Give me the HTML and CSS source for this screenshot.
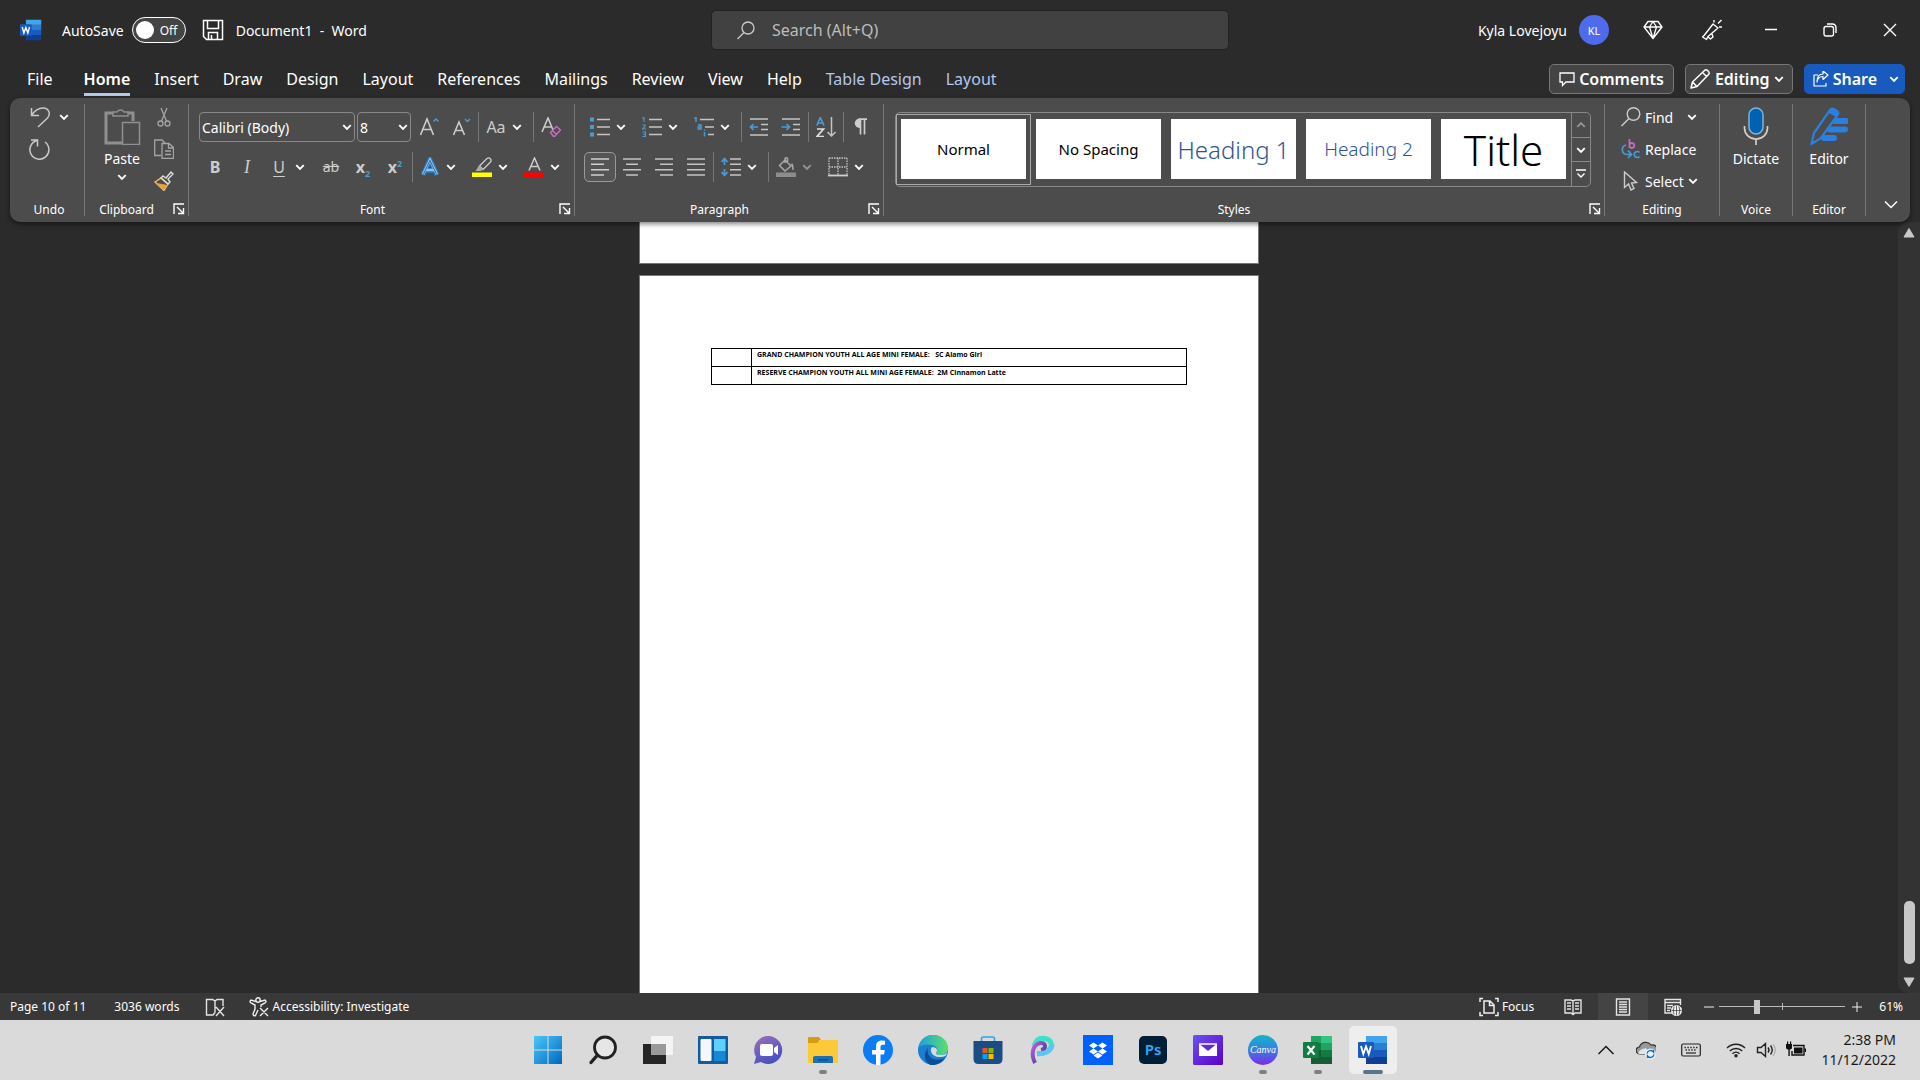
FILE: index.html
```html
<!DOCTYPE html>
<html lang="en">
<head>
    <meta charset="UTF-8">
    <meta name="viewport" content="width=device-width, initial-scale=1.0">
    <title>Document1 - Word</title>
    <link rel="stylesheet" href="styles.css">
</head>
<body>

    <!-- Shared icons -->
    <svg class="defs" aria-hidden="true">
        <symbol id="chev" viewBox="0 0 8 8"><path d="M1 2.500l3 3 3-3" fill="none" stroke="currentColor" stroke-width="1.500"/></symbol>
        <symbol id="launch" viewBox="0 0 12 12"><path d="M1 11V1h10M4 4l6 6M10.500 5v5.500H5" fill="none" stroke="currentColor" stroke-width="1.400"/></symbol>
        <symbol id="word" viewBox="0 0 30 30">
            <path d="M8 1h21v7H8z" fill="#41a5ee"/><path d="M8 8h21v7H8z" fill="#2b7cd3"/><path d="M8 15h21v7H8z" fill="#185abd"/><path d="M8 22h21v7H8z" fill="#103f91"/>
            <rect y="7" width="16" height="16" rx="1" fill="#185abd"/>
            <path d="M3 11l2.300 8L8 11.500 10.700 19 13 11" fill="none" stroke="#fff" stroke-width="1.900"/>
        </symbol>
    </svg>

    <!-- Title bar -->
    <header class="titlebar">
        <div class="title-left">
            <svg class="i22" viewBox="0 0 30 30"><use href="#word"/></svg>
            <label class="autosave">AutoSave
                <input type="checkbox" class="switch-input">
                <span class="switch"><span class="knob"></span>Off</span>
            </label>
            <button class="plain" aria-label="Save"><svg class="i22" viewBox="0 0 22 22"><path d="M1.500 1.500h19v19h-16l-3-3zM5.500 1.500v8h11v-8M6.500 20.500v-7h9v7M9.500 16v4.500" fill="none" stroke="#fff" stroke-width="1.500"/></svg></button>
            <span class="doc-name">Document1&nbsp; -&nbsp; Word</span>
        </div>
        <div class="search">
            <svg class="i20" viewBox="0 0 20 20"><circle cx="12" cy="8" r="6" fill="none" stroke="#ccc" stroke-width="1.300"/><path d="M8 12.500L1.500 19" stroke="#ccc" stroke-width="1.300"/></svg>
            <input type="text" placeholder="Search (Alt+Q)" aria-label="Search">
        </div>
        <div class="title-right">
            <span class="user">Kyla Lovejoyu</span>
            <span class="avatar">KL</span>
            <button class="win" aria-label="Premium"><svg class="i20" viewBox="0 0 20 20"><path d="M5 1.500h10l4 5.500-9 11.500L1 7zM1 7h18M10 1.500L6.500 7 10 18.500 13.500 7z" fill="none" stroke="#fff" stroke-width="1.300" stroke-linejoin="round"/></svg></button>
            <button class="win" aria-label="Coming soon"><svg class="i22" viewBox="0 0 22 22"><path d="M12 5l5 4-10 8.500-1.500 3-4-2.500 2-2zM6.500 17.500l3 2.500 2.500-2-1-3M13 3.500V1M17 4.500L20.500 1M18 8h3" fill="none" stroke="#fff" stroke-width="1.400" stroke-linejoin="round"/></svg></button>
            <button class="win" aria-label="Minimize"><svg class="i14" viewBox="0 0 14 14"><path d="M1 6.500h12" stroke="#fff" stroke-width="1.500"/></svg></button>
            <button class="win" aria-label="Restore"><svg class="i14" viewBox="0 0 14 14"><rect x="1" y="3.500" width="9.500" height="9.500" rx="2" fill="none" stroke="#fff" stroke-width="1.400"/><path d="M4 1h5.500a3.500 3.500 0 0 1 3.500 3.500V10" fill="none" stroke="#fff" stroke-width="1.400"/></svg></button>
            <button class="win" aria-label="Close"><svg class="i14" viewBox="0 0 14 14"><path d="M1 1l12 12M13 1L1 13" stroke="#fff" stroke-width="1.400"/></svg></button>
        </div>
    </header>

    <!-- Ribbon tabs -->
    <nav class="tabs">
        <a href="#" class="tab file">File</a>
        <a href="#" class="tab active">Home</a>
        <a href="#" class="tab">Insert</a>
        <a href="#" class="tab">Draw</a>
        <a href="#" class="tab">Design</a>
        <a href="#" class="tab">Layout</a>
        <a href="#" class="tab">References</a>
        <a href="#" class="tab">Mailings</a>
        <a href="#" class="tab">Review</a>
        <a href="#" class="tab">View</a>
        <a href="#" class="tab">Help</a>
        <a href="#" class="tab context">Table Design</a>
        <a href="#" class="tab context">Layout</a>
        <div class="tab-actions">
            <button class="action"><svg class="i16" viewBox="0 0 16 16"><path d="M1 2h14v9H7l-3.500 3.500V11H1z" fill="none" stroke="#fff" stroke-width="1.300"/></svg>Comments</button>
            <button class="action"><svg class="i22" viewBox="0 0 22 22"><path d="M2 20l1.500-6L15.500 2.500a2 2 0 0 1 3 0l1 1a2 2 0 0 1 0 3L8 18.500zM13.500 4.500l4 4M3.500 14l4.500 4.500" fill="none" stroke="#fff" stroke-width="1.500" stroke-linejoin="round"/></svg>Editing<svg class="i10" viewBox="0 0 8 8"><use href="#chev"/></svg></button>
            <button class="action share"><svg class="i16" viewBox="0 0 16 16"><path d="M5 4H1v11h12v-3M4 11c.500-4 3-5.500 6-5.500V8.500l5-4.500-5-4v3C6 3 4 6 4 11z" fill="none" stroke="#fff" stroke-width="1.200" stroke-linejoin="round"/></svg>Share<svg class="i10" viewBox="0 0 8 8"><use href="#chev"/></svg></button>
        </div>
    </nav>

    <!-- Ribbon -->
    <section class="ribbon">
        <div class="group undo">
            <div class="undo-tools">
                <button class="mini" aria-label="Undo"><svg class="i22" viewBox="0 0 22 22"><path d="M2.500 2v7.500H10M2.500 9.500C6 4 10 2 14 2c6 0 8 6 4.500 10L9 21" fill="none" stroke="#c8c8c8" stroke-width="1.500"/></svg><svg class="i10" viewBox="0 0 8 8"><use href="#chev"/></svg></button>
                <button class="mini" aria-label="Repeat"><svg class="i22" viewBox="0 0 22 22"><path d="M2 2h6.500v6.500M8 2.500A9.500 9.500 0 1 0 16 4" fill="none" stroke="#c8c8c8" stroke-width="1.500"/></svg></button>
            </div>
            <div class="foot"><span>Undo</span></div>
        </div>

        <div class="group clipboard">
            <div class="clip-tools">
                <button class="big" aria-label="Paste"><svg class="i38" viewBox="0 0 38 38"><path d="M10 6H3v30h17M25 6h5v8" fill="none" stroke="#8f8f8f" stroke-width="3"/><path d="M10 9V5h4a4 4 0 0 1 7 0h4v4z" fill="#4c4c4c" stroke="#8f8f8f" stroke-width="1.500"/><rect x="19.500" y="15.500" width="17" height="22" fill="#4c4c4c" stroke="#8f8f8f" stroke-width="1.500"/></svg><span>Paste</span><svg class="i10" viewBox="0 0 8 8"><use href="#chev"/></svg></button>
                <div class="clip-side">
                    <button class="mini" aria-label="Cut"><svg class="i20" viewBox="0 0 20 20"><g fill="none" stroke="#a5a5a5" stroke-width="1.300"><circle cx="6.500" cy="16.500" r="2.500"/><circle cx="13.500" cy="16.500" r="2.500"/><path d="M7 1l5.500 13M13 1L7.500 14"/></g></svg></button>
                    <button class="mini" aria-label="Copy"><svg class="i20" viewBox="0 0 20 20"><path d="M7 16.500H.700V1H8l3 3M8 4.500h7l4.500 4V19.500H8zM14.500 5v4h5M11 12h6M11 15.500h6" fill="none" stroke="#a5a5a5" stroke-width="1.300"/></svg></button>
                    <button class="mini" aria-label="Format Painter"><svg class="i20" viewBox="0 0 20 20"><path d="M1 11l6-4 7 6-4 6.500z" fill="#4c4c4c" stroke="#f4bc60" stroke-width="1.400"/><path d="M3 12l10 2-3.500 5z" fill="#e9a33a"/><path d="M7 7l2-2 3 2 5-6 2 2-5 5 2 3-2 2z" fill="none" stroke="#ddd" stroke-width="1.400"/></svg></button>
                </div>
            </div>
            <div class="foot"><span>Clipboard</span><button class="launcher" aria-label="Clipboard settings"><svg class="i12" viewBox="0 0 12 12"><use href="#launch"/></svg></button></div>
        </div>

        <div class="group font">
            <div class="row">
                <label class="combo family"><select aria-label="Font"><option>Calibri (Body)</option></select><svg class="i10" viewBox="0 0 8 8"><use href="#chev"/></svg></label>
                <label class="combo size"><select aria-label="Font size"><option>8</option></select><svg class="i10" viewBox="0 0 8 8"><use href="#chev"/></svg></label>
                <button class="tool" aria-label="Grow font"><svg class="i20" viewBox="0 0 20 20"><path d="M1.500 18L8 2l6.500 16M4 12.500h8" fill="none" stroke="#ccc" stroke-width="1.600"/><path d="M14.500 4.500L17 2l2.500 2.500" fill="none" stroke="#4a9bd4" stroke-width="1.500"/></svg></button>
                <button class="tool" aria-label="Shrink font"><svg class="i20" viewBox="0 0 20 20"><path d="M2.500 18L8 5l5.500 13M4.500 13.500h7" fill="none" stroke="#ccc" stroke-width="1.600"/><path d="M14 2l2.500 2.500L19 2" fill="none" stroke="#4a9bd4" stroke-width="1.500"/></svg></button>
                <span class="sep"></span>
                <button class="tool split"><span class="glyph">Aa</span><svg class="i10" viewBox="0 0 8 8"><use href="#chev"/></svg></button>
                <span class="sep"></span>
                <button class="tool" aria-label="Clear formatting"><svg class="i20" viewBox="0 0 20 20"><path d="M1 15L7 1l5 12M3 10h7" fill="none" stroke="#ccc" stroke-width="1.600"/><path d="M9.500 15.500l6-6 4 3.500-6 6.500h-1zM11.500 13.500l4 4" fill="none" stroke="#c86bc8" stroke-width="1.500"/></svg></button>
            </div>
            <div class="row">
                <button class="tool" aria-label="Bold"><span class="glyph bold">B</span></button>
                <button class="tool" aria-label="Italic"><span class="glyph italic">I</span></button>
                <button class="tool split" aria-label="Underline"><span class="glyph under">U</span><svg class="i10" viewBox="0 0 8 8"><use href="#chev"/></svg></button>
                <button class="tool" aria-label="Strikethrough"><span class="glyph strike">ab</span></button>
                <button class="tool" aria-label="Subscript"><span class="glyph bold">x<sub>2</sub></span></button>
                <button class="tool" aria-label="Superscript"><span class="glyph bold">x<sup>2</sup></span></button>
                <span class="sep"></span>
                <button class="tool split" aria-label="Text effects"><svg class="i20" viewBox="0 0 20 20"><path d="M3 18L10 2.500 17 18M5.500 13.500h9" fill="none" stroke="#1f78c4" stroke-width="5"/><path d="M3 17.500L10 3l7 14.500M6 13h8" fill="none" stroke="#8cc4f2" stroke-width="2.600"/><path d="M3.300 17.500L10 3.500l6.700 14" fill="none" stroke="#3d4c5a" stroke-width=".8"/></svg><svg class="i10" viewBox="0 0 8 8"><use href="#chev"/></svg></button>
                <button class="tool split" aria-label="Highlight"><svg class="i20" viewBox="0 0 20 20"><path d="M7.500 9L15 1.500a2.500 2.500 0 0 1 3.500 3.500L11 12.500z" fill="none" stroke="#ccc" stroke-width="1.300"/><path d="M7 8.500l4.500 4-3 1.500H3.500z" fill="#aaa"/><path d="M0 15.500h20v4.500H0z" fill="#ff0"/></svg><svg class="i10" viewBox="0 0 8 8"><use href="#chev"/></svg></button>
                <button class="tool split" aria-label="Font color"><svg class="i20" viewBox="0 0 20 20"><path d="M5 13.500L10.500 1 16 13.500M7 9.500h7" fill="none" stroke="#ccc" stroke-width="1.500"/><path d="M0 15.500h20v4.500H0z" fill="red"/></svg><svg class="i10" viewBox="0 0 8 8"><use href="#chev"/></svg></button>
            </div>
            <div class="foot"><span>Font</span><button class="launcher" aria-label="Font settings"><svg class="i12" viewBox="0 0 12 12"><use href="#launch"/></svg></button></div>
        </div>

        <div class="group paragraph">
            <div class="row">
                <button class="tool split" aria-label="Bullets"><svg class="i20" viewBox="0 0 20 20"><path d="M0 .5h4v4H0zM0 8h4v4H0zM0 15.500h4v4H0z" fill="#4a9bd4"/><path d="M7 2.500h13M7 10h13M7 17.500h13" stroke="#c4c4c4" stroke-width="1.600"/></svg><svg class="i10" viewBox="0 0 8 8"><use href="#chev"/></svg></button>
                <button class="tool split" aria-label="Numbering"><svg class="i20" viewBox="0 0 20 20"><path d="M.5 1.500L2 .500V5M.5 8h2.500v1.500L.5 12H4M.5 15H3.500v4.500H.5M1 17.200h2.500" fill="none" stroke="#4a9bd4" stroke-width="1.100"/><path d="M7 2.500h13M7 10h13M7 17.500h13" stroke="#c4c4c4" stroke-width="1.600"/></svg><svg class="i10" viewBox="0 0 8 8"><use href="#chev"/></svg></button>
                <button class="tool split" aria-label="Multilevel list"><svg class="i20" viewBox="0 0 20 20"><path d="M.5 1.500L2 .500V5M4 8h3v4H4.200v-2H7M10.500 15v4.500M10.500 12.500v1.200" fill="none" stroke="#4a9bd4" stroke-width="1.500"/><path d="M6 2.500h14M11 10h9M14 17.500h6" stroke="#c4c4c4" stroke-width="1.600"/></svg><svg class="i10" viewBox="0 0 8 8"><use href="#chev"/></svg></button>
                <span class="sep"></span>
                <button class="tool" aria-label="Decrease indent"><svg class="i20" viewBox="0 0 20 20"><path d="M1 2h18M12 7.500h7M12 12.500h7M1 18h18" stroke="#c4c4c4" stroke-width="1.600"/><path d="M9 10H1.500M4.500 7l-3 3 3 3" fill="none" stroke="#4a9bd4" stroke-width="1.700"/></svg></button>
                <button class="tool" aria-label="Increase indent"><svg class="i20" viewBox="0 0 20 20"><path d="M1 2h18M12 7.500h7M12 12.500h7M1 18h18" stroke="#c4c4c4" stroke-width="1.600"/><path d="M.5 10H8M5.500 7l3 3-3 3" fill="none" stroke="#4a9bd4" stroke-width="1.700"/></svg></button>
                <span class="sep"></span>
                <button class="tool" aria-label="Sort"><svg class="i20" viewBox="0 0 20 20"><path d="M.8 8.500L4.300.500 8 8.500M2 6h4.500" fill="none" stroke="#4a9bd4" stroke-width="1.700"/><path d="M1 12h6.500L1 19.500h7" fill="none" stroke="#ddd" stroke-width="1.700"/><path d="M15.500 0v19M11.500 15l4 4 4-4" fill="none" stroke="#c4c4c4" stroke-width="1.500"/></svg></button>
                <span class="sep"></span>
                <button class="tool" aria-label="Show marks"><svg class="i20" viewBox="0 0 20 20"><path d="M9.500 2v15.500M13.500 2v15.500M8 2.200h8" fill="none" stroke="#ccc" stroke-width="1.700"/><path d="M9.500 1.500v9.500H8.500a4.750 4.750 0 0 1 0-9.500z" fill="#ccc"/></svg></button>
            </div>
            <div class="row">
                <button class="tool on" aria-label="Align left"><svg class="i20" viewBox="0 0 20 20"><path d="M1 2h18M1 7.300h13M1 12.700h18M1 18h13" stroke="#d0d0d0" stroke-width="1.600"/></svg></button>
                <button class="tool" aria-label="Center"><svg class="i20" viewBox="0 0 20 20"><path d="M1 2h18M4 7.300h12M1 12.700h18M4 18h12" stroke="#c4c4c4" stroke-width="1.600"/></svg></button>
                <button class="tool" aria-label="Align right"><svg class="i20" viewBox="0 0 20 20"><path d="M1 2h18M6 7.300h13M1 12.700h18M6 18h13" stroke="#c4c4c4" stroke-width="1.600"/></svg></button>
                <button class="tool" aria-label="Justify"><svg class="i20" viewBox="0 0 20 20"><path d="M1 2h18M1 7.300h18M1 12.700h18M1 18h18" stroke="#c4c4c4" stroke-width="1.600"/></svg></button>
                <span class="sep"></span>
                <button class="tool split" aria-label="Line spacing"><svg class="i20" viewBox="0 0 20 20"><path d="M3.500 2v6M3.500 12v6M.5 5l3-3.500 3 3.500M.5 15l3 3.500 3-3.500" fill="none" stroke="#4a9bd4" stroke-width="1.700"/><path d="M9 2h11M9 7.300h11M9 12.700h11M9 18h11" stroke="#c4c4c4" stroke-width="1.600"/></svg><svg class="i10" viewBox="0 0 8 8"><use href="#chev"/></svg></button>
                <span class="sep"></span>
                <button class="tool split" aria-label="Shading"><svg class="i20" viewBox="0 0 20 20"><path d="M9 3l6 6-6 5-5.500-5.500zM9 6V1.500a1.500 1.500 0 0 1 2.500 0V6M15.500 8q1-3 1.500 5" fill="none" stroke="#a8a8a8" stroke-width="1.500"/><path d="M0 15.500h20v4.500H0z" fill="#8c8c8c"/></svg><svg class="i10 dim" viewBox="0 0 8 8"><use href="#chev"/></svg></button>
                <button class="tool split" aria-label="Borders"><svg class="i20" viewBox="0 0 20 20"><path d="M1 1h18M1 1v17M19 1v17M10 1v17M1 10h18" fill="none" stroke="#c4c4c4" stroke-width="1.300" stroke-dasharray="1.500 1"/><path d="M0 18.500h20" stroke="#d0d0d0" stroke-width="1.800"/></svg><svg class="i10" viewBox="0 0 8 8"><use href="#chev"/></svg></button>
            </div>
            <div class="foot"><span>Paragraph</span><button class="launcher" aria-label="Paragraph settings"><svg class="i12" viewBox="0 0 12 12"><use href="#launch"/></svg></button></div>
        </div>

        <div class="group styles">
            <div class="gallery">
                <button class="style selected"><span>Normal</span></button>
                <button class="style"><span>No Spacing</span></button>
                <button class="style"><span class="h1">Heading 1</span></button>
                <button class="style"><span class="h2">Heading 2</span></button>
                <button class="style"><span class="title">Title</span></button>
                <div class="gallery-nav">
                    <button aria-label="Up"><svg class="i10 up dim" viewBox="0 0 8 8"><use href="#chev"/></svg></button>
                    <button aria-label="Down"><svg class="i10" viewBox="0 0 8 8"><use href="#chev"/></svg></button>
                    <button aria-label="More"><svg class="i10" viewBox="0 0 10 10"><path d="M0 1h10M1.500 4.500L5 8l3.500-3.500" fill="none" stroke="#fff" stroke-width="1.400"/></svg></button>
                </div>
            </div>
            <div class="foot"><span>Styles</span><button class="launcher" aria-label="Styles settings"><svg class="i12" viewBox="0 0 12 12"><use href="#launch"/></svg></button></div>
        </div>

        <div class="group editing">
            <div class="edit-tools">
                <button class="line find"><svg class="i20" viewBox="0 0 20 20"><circle cx="12.500" cy="7" r="6.300" fill="none" stroke="#ccc" stroke-width="1.400"/><path d="M8 11.500L.5 19" stroke="#ccc" stroke-width="1.400"/></svg>Find<svg class="i10" viewBox="0 0 8 8"><use href="#chev"/></svg></button>
                <button class="line"><svg class="i20" viewBox="0 0 20 20"><path d="M8.500 0v9M8.500 5.500a2.500 2.500 0 1 1 0 2" fill="none" stroke="#c86bc8" stroke-width="1.800"/><path d="M18.500 13.500a3 3 0 1 0 0 4M5 6c-5 1-5 9 1 9.500h4M7 11.500l3.500 4L7 19" fill="none" stroke="#4a9bd4" stroke-width="1.700"/></svg>Replace</button>
                <button class="line select"><svg class="i20" viewBox="0 0 20 20"><path d="M3.500 1v15.500l4-3.500 2.500 6 3-1.500-2.500-5.500 5-.5z" fill="none" stroke="#ccc" stroke-width="1.400"/></svg>Select<svg class="i10" viewBox="0 0 8 8"><use href="#chev"/></svg></button>
            </div>
            <div class="foot"><span>Editing</span></div>
        </div>

        <div class="group narrow">
            <button class="big"><svg class="i38" viewBox="0 0 38 38"><rect x="12" y="1" width="14" height="26" rx="7" fill="#0063b1" stroke="#7db4dc" stroke-width="1.500"/><path d="M7.500 19v2a11.500 11 0 0 0 23 0v-2M19 32v6" fill="none" stroke="#d5cdc4" stroke-width="1.700"/></svg><span>Dictate</span></button>
            <div class="foot"><span>Voice</span></div>
        </div>

        <div class="group narrow">
            <button class="big"><svg class="i38" viewBox="0 0 38 38"><path d="M25 14h11M20 22.500h15M14 31h10" stroke="#2b7fe0" stroke-width="6" stroke-linecap="round"/><path d="M1.500 37L4 26 20 3q1.500-2 3.500-1L27 4q2 1.500 1 3.500L11 31z" fill="#4c4c4c" stroke="#2b7fe0" stroke-width="2.200"/><path d="M20 3q1.500-2 3.500-1L27 4q2 1.500 1 3.500l-2 2.500-8-4.500z" fill="#2b7fe0"/></svg><span>Editor</span></button>
            <div class="foot"><span>Editor</span></div>
        </div>

        <div class="collapse"><button class="plain" aria-label="Ribbon options"><svg class="i14" viewBox="0 0 14 14"><path d="M1 4.500l6 6 6-6" fill="none" stroke="#fff" stroke-width="1.500"/></svg></button></div>
    </section>

    <!-- Document -->
    <main class="workspace">
        <div class="pages">
            <div class="page previous"></div>
            <div class="page current">
                <table>
                    <tr><td class="place"></td><td>GRAND CHAMPION YOUTH ALL AGE MINI FEMALE:&nbsp;&nbsp; SC Alamo Girl</td></tr>
                    <tr><td class="place"></td><td>RESERVE CHAMPION YOUTH ALL MINI AGE FEMALE:&nbsp; 2M Cinnamon Latte</td></tr>
                </table>
            </div>
        </div>
        <div class="scrollbar">
            <button class="plain" aria-label="Scroll up"><svg class="i12" viewBox="0 0 12 12"><path d="M6 1.500L11 10H1z" fill="#c8c8c8" stroke="#c8c8c8" stroke-linejoin="round"/></svg></button>
            <div class="thumb"></div>
            <button class="plain" aria-label="Scroll down"><svg class="i12" viewBox="0 0 12 12"><path d="M6 10.500L1 2h10z" fill="#c8c8c8" stroke="#c8c8c8" stroke-linejoin="round"/></svg></button>
        </div>
    </main>

    <!-- Status bar -->
    <footer class="statusbar">
        <button class="status pagecount">Page 10 of 11</button>
        <button class="status words">3036 words</button>
        <button class="status proof" aria-label="Proofing"><svg class="i20" viewBox="0 0 20 20"><path d="M10 15.500l-2 2.500H1.500V2.500h6L10 4v11.500M10 4l2-1.500h6V9M11 10l8 9M19 10l-8 9" fill="none" stroke="#e4e4e4" stroke-width="1.400"/></svg></button>
        <button class="status"><svg class="i20" viewBox="0 0 20 20"><circle cx="9" cy="3" r="2.200" fill="none" stroke="#eee" stroke-width="1.400"/><path d="M7 4.500L2 3q-2 1.500 0 3l4 2v4l-2 5q.500 2.500 2.500 1.500L9 13M11 4.500L16 3q2 1.500 0 3l-4 2v2M11 11l8 8M19 11l-8 8" fill="none" stroke="#eee" stroke-width="1.400"/></svg>Accessibility: Investigate</button>
        <div class="views">
            <button class="status focus"><svg class="i20" viewBox="0 0 20 20"><path d="M1 5V1.500h3M1 15v3.500h3M16 1.500h3V5M16 18.500h3V15" fill="none" stroke="#eee" stroke-width="1.500"/><path d="M5 4h6l4 4v8H5zM10.500 4v4.500H15" fill="none" stroke="#eee" stroke-width="1.500"/></svg>Focus</button>
            <button class="view" aria-label="Read mode"><svg class="i18" viewBox="0 0 18 18"><path d="M1 2h6l2 1 2-1h6v13h-6l-2 1.500L7 15H1zM9 3v13M3 5h4M3 8h4M3 11h4M11 5h4M11 8h4M11 11h4" fill="none" stroke="#e4e4e4" stroke-width="1.400"/></svg></button>
            <button class="view current-view" aria-label="Print layout"><svg class="i18" viewBox="0 0 18 18"><path d="M2.500 1h13v16h-13zM5 4h8M5 6.500h8M5 9h8M5 11.500h8M5 14h8" fill="none" stroke="#e4e4e4" stroke-width="1.400"/></svg></button>
            <button class="view" aria-label="Web layout"><svg class="i18" viewBox="0 0 18 18"><path d="M8 15H1V1.500h15.500V7M1 4.500h15M3 7.500h6M3 10h4M3 12.500h3" fill="none" stroke="#e4e4e4" stroke-width="1.400"/><circle cx="12.500" cy="12.500" r="5.500" fill="#eee"/><path d="M7.500 12.500h10M12.500 7.500v10M10 8.500q-1.500 4 0 8M15 8.500q1.500 4 0 8" fill="none" stroke="#444" stroke-width=".8"/></svg></button>
            <button class="zoom-step" aria-label="Zoom out"><svg class="i10" viewBox="0 0 10 10"><path d="M0 5h10" stroke="#eee"/></svg></button>
            <input type="range" class="zoom" min="0" max="100" value="29" aria-label="Zoom">
            <button class="zoom-step" aria-label="Zoom in"><svg class="i10" viewBox="0 0 10 10"><path d="M0 5h10M5 0v10" stroke="#eee"/></svg></button>
            <button class="status percent">61%</button>
        </div>
    </footer>

    <!-- Taskbar -->
    <div class="taskbar">
        <div></div>
        <div class="apps">
            <button class="app" aria-label="Start"><svg viewBox="0 0 30 30"><defs><linearGradient id="gs" x2="1" y2="1"><stop stop-color="#4cc8f8"/><stop offset="1" stop-color="#0067c0"/></linearGradient></defs><path d="M1 1h13.500v13.500H1zM15.500 1H29v13.500H15.500zM1 15.500h13.500V29H1zM15.500 15.500H29V29H15.500z" fill="url(#gs)"/></svg></button>
            <button class="app" aria-label="Search"><svg viewBox="0 0 30 30"><circle cx="17" cy="12.500" r="10.500" fill="#e6e6e6" stroke="#222" stroke-width="2.800"/><path d="M9.500 20L3 27.500" stroke="#222" stroke-width="3.400" stroke-linecap="round"/></svg></button>
            <button class="app" aria-label="Task view"><svg viewBox="0 0 30 30"><path d="M0 9h23v20H0z" fill="#262626"/><path d="M8 1h22v19H8z" fill="#f4f4f4"/><path d="M8 9h15v11H8z" fill="#9a9a9a"/></svg></button>
            <button class="app" aria-label="Widgets"><svg viewBox="0 0 30 30"><rect y="1" width="30" height="28" rx="1" fill="#145aa0"/><rect x="2.500" y="4" width="11" height="22" rx="1" fill="#f5f7fa"/><path d="M16 4h11.500v12H16z" fill="#5fd0fa"/><path d="M16 16h11.500v10H16z" fill="#1787d6"/></svg></button>
            <button class="app" aria-label="Chat"><svg viewBox="0 0 30 30"><defs><linearGradient id="gc" x2=".5" y2="1"><stop stop-color="#9a72b8"/><stop offset="1" stop-color="#4a50c0"/></linearGradient></defs><path d="M15 1a14 14 0 1 1-7 26L1 29l2-7A14 14 0 0 1 15 1z" fill="url(#gc)"/><rect x="7" y="9" width="13" height="12" rx="2" fill="#fff"/><path d="M21 13l4-3v10l-4-3z" fill="#fff"/></svg></button>
            <button class="app running" aria-label="File Explorer"><svg viewBox="0 0 30 30"><path d="M0 3q0-1 1-1h10l2 3h-2v5H0z" fill="#d99a16"/><path d="M0 8h9l3-3h18v23H0z" fill="#fcc937"/><path d="M5 28v-5q0-2 2-2h16q2 0 2 2v5z" fill="#1a6fb5"/><path d="M10 25h10" stroke="#0b4f8c" stroke-width="1.500"/></svg></button>
            <button class="app" aria-label="Facebook"><svg viewBox="0 0 30 30"><circle cx="15" cy="15" r="15" fill="#0a7cf5"/><path d="M13 30V19.500H9V15h4v-3.500c0-4 2.300-6 6-6l3 .3v4h-2c-2 0-2.500 1-2.500 2.200v3h4.300l-.8 4.500h-3.500V30z" fill="#fff"/></svg></button>
            <button class="app" aria-label="Edge"><svg viewBox="0 0 30 30"><defs><linearGradient id="ge" x2="1"><stop stop-color="#1b9fe0"/><stop offset="1" stop-color="#5be06a"/></linearGradient></defs><circle cx="15" cy="15" r="15" fill="#1a7fd0"/><path d="M.500 13C2 5 8 0 15 0c9 0 15 6 15 13 0 5-4 7-8 7-3 0-5-1-3.500-3 1-1.500 1.500-5-3-6.500C10 9 4 9 .500 13z" fill="url(#ge)"/><path d="M10 13c-2 8 5 15 17 10-4 6-11 8-15 6.700C5 26 6 17 10 13z" fill="#0c4f94"/><path d="M14 12c-3 3 0 10 7 10 3 0 5-.5 7-1.500L30 16c-1 3-4 4-8 4-3 0-5-1-3.500-3s0-5-4.500-5z" fill="#dadada"/></svg></button>
            <button class="app" aria-label="Store"><svg viewBox="0 0 30 30"><path d="M8.500 6V4q0-2 2-2h9q2 0 2 2v2" fill="none" stroke="#2ba5e8" stroke-width="1.600"/><path d="M.5 6h29v18q0 5-5 5h-19q-5 0-5-5z" fill="#1b4d84"/><path d="M9.500 13h5v5h-5z" fill="#f25022"/><path d="M15.500 13h5v5h-5z" fill="#7fba00"/><path d="M9.500 19h5v5h-5z" fill="#00a4ef"/><path d="M15.500 19h5v5h-5z" fill="#ffb900"/></svg></button>
            <button class="app" aria-label="Picsart"><svg viewBox="0 0 30 30"><defs><linearGradient id="gp" y2="1"><stop stop-color="#c45de0"/><stop offset="1" stop-color="#1f3d8c"/></linearGradient></defs><path d="M6 11C8 5 12 2.500 17 3.500c7 1 8 8 4 11.500-3 3-7 3-12 4" fill="none" stroke="#3fe0c8" stroke-width="5"/><path d="M7 28C3 20 4 10 12 8c6-1 7 6 1 7" fill="none" stroke="url(#gp)" stroke-width="4"/><path d="M9 18.500c6 0 9 0 12-3 2-2 3-3 3-6" fill="none" stroke="#5fc4f0" stroke-width="5"/></svg></button>
            <button class="app" aria-label="Dropbox"><svg viewBox="0 0 30 30"><path d="M0 0h30v30H0z" fill="#0061fe"/><path d="M10.500 7.500l4.500 3-4.500 3-4.500-3zM19.500 7.500l4.500 3-4.500 3-4.500-3zM10.500 13.500l4.500 3-4.500 3-4.500-3zM19.500 13.500l4.500 3-4.500 3-4.500-3zM15 17.500l4.500 3-4.500 3-4.500-3z" fill="#fff"/></svg></button>
            <button class="app" aria-label="Photoshop"><span class="ps">Ps</span></button>
            <button class="app" aria-label="Mail"><svg viewBox="0 0 30 30"><defs><linearGradient id="gm" x2="1" y2="1"><stop stop-color="#6c50f5"/><stop offset="1" stop-color="#5a00c8"/></linearGradient></defs><rect width="30" height="30" rx="1.500" fill="url(#gm)"/><path d="M6 9h18v12H6z" fill="#fff"/><path d="M6.500 9h17L15 16z" fill="#5b2bd8"/><path d="M6 9h18" stroke="#fff" stroke-width="1.500"/></svg></button>
            <button class="app running" aria-label="Canva"><span class="canva">Canva</span></button>
            <button class="app running" aria-label="Excel"><svg viewBox="0 0 30 30"><path d="M8 1h21v28H8z" fill="#21a366"/><path d="M18 1h11v7H18z" fill="#33c481"/><path d="M8 8h10v7H8z" fill="#107c41"/><path d="M8 15h21v14H8z" fill="#185c37"/><path d="M18 15h11v7H18z" fill="#107c41"/><rect y="7" width="16" height="16" rx="1" fill="#107c41"/><path d="M4.500 11l7 8.500M11.500 11l-7 8.500" stroke="#fff" stroke-width="2.100"/></svg></button>
            <button class="app running front" aria-label="Word"><svg viewBox="0 0 30 30"><use href="#word"/></svg></button>
        </div>
        <div class="tray">
            <button class="plain" aria-label="Show hidden icons"><svg class="i18" viewBox="0 0 18 18"><path d="M1.500 13L9 5.500l7.500 7.500" fill="none" stroke="#1a1a1a" stroke-width="1.500"/></svg></button>
            <button class="plain cloud" aria-label="OneDrive"><svg class="i20" viewBox="0 0 20 20"><path d="M4 14a3.500 3.500 0 0 1-.5-7A6.500 6.500 0 0 1 15 5a5 5 0 0 1 4 9z" fill="#999" stroke="#333" stroke-width="1.200"/><path d="M2 13q2-4 8-5l3 6H3z" fill="#e4e4e4"/><circle cx="14.500" cy="14" r="5.500" fill="#e8f3fc"/><path d="M11 13.500a3.600 3.600 0 0 1 6.500-1.500v-2M18 14.500a3.600 3.600 0 0 1-6.500 1.500v2" fill="none" stroke="#1468b8" stroke-width="1.400"/></svg></button>
            <button class="plain keyboard" aria-label="Touch keyboard"><svg class="i20" viewBox="0 0 20 20"><rect x=".7" y="4" width="18.600" height="12" rx="1.500" fill="none" stroke="#222" stroke-width="1.200"/><path d="M3.500 7.500h13M4.500 10h11" stroke="#222" stroke-width="1.400" stroke-dasharray="1.400 1.500"/><path d="M5 13h10" stroke="#222" stroke-width="1.200"/></svg></button>
            <button class="plain" aria-label="Network"><svg class="i20" viewBox="0 0 20 20"><path d="M1 8a12.700 12.700 0 0 1 18 0M3.800 11a8.800 8.800 0 0 1 12.400 0M6.500 13.700a5 5 0 0 1 7 0" fill="none" stroke="#222" stroke-width="1.500"/><circle cx="10" cy="15.800" r="1.700" fill="#222"/></svg></button>
            <button class="plain" aria-label="Volume"><svg class="i20" viewBox="0 0 20 20"><path d="M1.500 7.500h3.500L9.500 3.500v13L5 12.500H1.500zM12 7.500q2 2.500 0 5M14.500 5.500q3.500 4.500 0 9" fill="none" stroke="#222" stroke-width="1.400"/><path d="M17 4q4.500 6 0 12" fill="none" stroke="#aaa" stroke-width="1.200"/></svg></button>
            <button class="plain" aria-label="Battery"><svg class="i20" viewBox="0 0 20 20"><path d="M7 5.500h11v9.500H6V11" fill="none" stroke="#111" stroke-width="1.400"/><path d="M8 7.500h8.500v6H8zM18.500 8.500H20v3.500h-1.500zM0 4h6v3.500q0 2-3 2t-3-2zM1 1.500h1.200V4H1zM4 1.500h1.200V4H4zM2.400 9h1.400v7H2.400z" fill="#111"/></svg></button>
            <button class="plain clock">2:38 PM<br>11/12/2022</button>
        </div>
    </div>

</body>
</html>
```
FILE: styles.css
```css
* {
    box-sizing: border-box;
}
body {
    margin: 0;
    height: 100vh;
    display: flex;
    flex-direction: column;
    background: #2b2b2b;
    color: white;
    font-family: "Noto Sans", "Open Sans", sans-serif;
    font-size: 15px;
    overflow: hidden;
}
button, input, select {
    font: inherit;
    color: inherit;
}
button {
    background: none;
    border: none;
    padding: 0;
    display: flex;
    align-items: center;
    justify-content: center;
}
svg {
    display: block;
    flex: none;
}
.defs {
    position: absolute;
    width: 0;
    height: 0;
}
.i10 { width: 10px; height: 10px; }
.i12 { width: 12px; height: 12px; }
.i14 { width: 14px; height: 14px; }
.i16 { width: 16px; height: 16px; }
.i18 { width: 18px; height: 18px; }
.i20 { width: 20px; height: 20px; }
.i22 { width: 22px; height: 22px; }
.i38 { width: 38px; height: 38px; }
.dim {
    opacity: 0.4;
}
.up {
    transform: rotate(180deg);
}

/* Title bar */
.titlebar {
    display: grid;
    grid-template-columns: 1fr 518px 1fr;
    height: 60px;
    align-items: center;
    padding: 0 0 0 20px;
}
.title-left {
    display: flex;
    align-items: center;
    font-size: 14px;
}
.autosave {
    display: flex;
    align-items: center;
    gap: 8px;
    margin: 0 16px 0 20px;
}
.switch-input {
    position: absolute;
    opacity: 0;
}
.switch {
    display: flex;
    align-items: center;
    gap: 6px;
    width: 54px;
    height: 26px;
    padding: 0 3px;
    border: 1px solid white;
    border-radius: 13px;
    background: #444;
    font-size: 12px;
}
.knob {
    width: 18px;
    height: 18px;
    border-radius: 50%;
    background: white;
}
.doc-name {
    margin-left: 12px;
    white-space: nowrap;
}
.search {
    display: flex;
    align-items: center;
    gap: 16px;
    height: 40px;
    padding: 0 24px;
    background: #414141;
    border: 1px solid #222;
    border-radius: 5px;
}
.search input {
    flex: 1;
    border: none;
    background: none;
    font-size: 16px;
    padding: 0;
}
.search input::placeholder {
    color: #bdbdbd;
}
.title-right {
    display: flex;
    align-items: center;
    justify-content: flex-end;
    font-size: 14px;
}
.avatar {
    display: flex;
    align-items: center;
    justify-content: center;
    width: 30px;
    height: 30px;
    margin: 0 14px 0 12px;
    border-radius: 50%;
    background: #4f6bed;
    font-size: 11px;
}
.win {
    width: 59px;
    height: 30px;
}
.win:last-child {
    width: 61px;
}

/* Tabs */
.tabs {
    display: flex;
    align-items: center;
    gap: 24px;
    height: 38px;
    padding: 0 15px 0 27px;
    font-size: 16px;
}
.tab {
    padding-top: 3px;
    color: white;
    text-decoration: none;
    white-space: nowrap;
    line-height: 28px;
    border-bottom: 3px solid transparent;
}
.file {
    margin-right: 7px;
}
.active {
    font-weight: 600;
    border-bottom-color: #b4c7ec;
}
.context {
    color: #b4c7ec;
}
.tab-actions {
    display: flex;
    gap: 11px;
    margin-left: auto;
}
.action {
    gap: 4px;
    height: 30px;
    padding: 0 9px;
    background: #444;
    border: 1px solid #777;
    border-radius: 5px;
    font-size: 16px;
    font-weight: 600;
}
.action:nth-child(2) {
    padding: 0 8px 0 3px;
}
.share {
    background: #185abd;
    border-color: #185abd;
    padding: 0 5px 0 8px;
}
.share .i10 {
    margin-left: 8px;
}

/* Ribbon */
.ribbon {
    position: relative;
    z-index: 1;
    display: flex;
    margin: 0 10px;
    padding: 6px 0;
    background: #4c4c4c;
    border-radius: 10px;
    box-shadow: 0 2px 5px rgba(0, 0, 0, 0.5);
}
.group {
    display: flex;
    flex-direction: column;
    height: 112px;
    padding-left: 8px;
    border-right: 1px solid #777;
}
.undo { width: 75px; padding: 0; }
.clipboard { width: 104px; }
.font { width: 386px; padding-left: 10px; }
.paragraph { width: 309px; padding-left: 9px; }
.styles { flex: 1; }
.editing { width: 115px; padding: 0; }
.narrow { width: 73px; padding: 0; }
.foot {
    display: flex;
    align-items: center;
    height: 18px;
    margin-top: auto;
    margin-left: -10px;
    margin-bottom: -2px;
    font-size: 12px;
    text-align: center;
}
.undo .foot, .editing .foot, .narrow .foot {
    margin-left: 0;
}
.undo .foot {
    padding-left: 4px;
}
.foot span {
    flex: 1;
}
.launcher {
    width: 18px;
    height: 18px;
}
.mini {
    height: 32px;
    gap: 8px;
}
.undo-tools {
    display: flex;
    flex-direction: column;
    align-items: flex-start;
    padding-left: 19px;
    margin-top: -3px;
}
.clip-tools {
    display: flex;
    align-items: flex-start;
    gap: 13px;
    padding-left: 10px;
}
.clip-side {
    margin-top: -3px;
}
.big {
    flex-direction: column;
    font-size: 14px;
    gap: 4px;
    padding-top: 3px;
}
.row {
    display: flex;
    align-items: center;
    height: 30px;
    margin-top: 8px;
}
.row + .row {
    margin-top: 10px;
}
.combo {
    position: relative;
    margin-right: 2px;
}
.combo select {
    appearance: none;
    width: 100%;
    height: 30px;
    padding: 0 2px;
    background: none;
    border: 1px solid #888;
    border-radius: 4px;
    font-size: 14px;
}
.combo svg {
    position: absolute;
    right: 3px;
    top: 10px;
    pointer-events: none;
}
.family { width: 156px; }
.size { width: 54px; }
.tool {
    width: 32px;
    height: 30px;
    flex: none;
}
.split {
    width: 52px;
    justify-content: flex-start;
    gap: 6px;
    padding-left: 6px;
}
.on {
    border: 1px solid #999;
    border-radius: 5px;
    background: #555;
}
.sep {
    width: 1px;
    height: 30px;
    margin: 0 1px;
    background: #777;
}
.glyph {
    min-width: 20px;
    font-size: 16px;
    color: #ccc;
    text-align: center;
    line-height: 20px;
}
.bold { font-weight: 700; }
.italic { font-family: "Liberation Serif", serif; font-style: italic; font-size: 18px; }
.under { text-decoration: underline; text-underline-offset: 3px; }
.strike { text-decoration: line-through; font-size: 14px; }
.glyph sub, .glyph sup {
    font-size: 9px;
    line-height: 0;
    color: #4a9bd4;
}

/* Styles gallery */
.gallery {
    display: flex;
    height: 75px;
    margin: 8px 13px 0 3px;
    border: 1px solid #888;
    border-radius: 5px;
}
.style {
    flex: 1;
    align-items: stretch;
    padding: 5px 4px 6px;
    border: 1px solid transparent;
}
.selected {
    margin: 1px 0;
    padding: 4px 4px 5px;
    border-color: #aaa;
}
.style span {
    flex: 1;
    display: flex;
    align-items: center;
    justify-content: center;
    background: white;
    color: black;
    font-size: 15px;
    white-space: nowrap;
}
.style .h1, .style .h2 {
    color: #2f5496;
    font-size: 24px;
    font-weight: 300;
}
.style .h2 {
    font-size: 19px;
}
.style .title {
    font-size: 42px;
    font-weight: 300;
}
.gallery-nav {
    display: flex;
    flex-direction: column;
    width: 19px;
    border-left: 1px solid #888;
}
.gallery-nav button {
    flex: 1;
}
.gallery-nav button + button {
    border-top: 1px solid #888;
}
.edit-tools {
    margin-top: -3px;
    padding-left: 16px;
}
.line {
    height: 32px;
    gap: 4px;
    font-size: 14px;
}
.find .i10 {
    margin-left: 10px;
}
.select {
    gap: 4px;
}
.collapse {
    display: flex;
    align-items: flex-end;
    justify-content: center;
    width: 44px;
    padding-right: 6px;
    padding-bottom: 5px;
}
.collapse .plain {
    margin-left: 12px;
}

/* Document */
.workspace {
    flex: 1;
    min-height: 0;
    display: flex;
}
.pages {
    flex: 1;
    display: flex;
    flex-direction: column;
    align-items: center;
    gap: 11px;
    overflow: hidden;
}
.page {
    width: 620px;
    flex: none;
    background: white;
    border: 1px solid #777;
}
.previous {
    height: 42px;
    border-top: none;
}
.current {
    height: 802px;
    padding: 72px 71px;
}
.page table {
    width: 100%;
    border-collapse: collapse;
    color: black;
    font-family: "Open Sans", sans-serif;
    font-size: 7px;
    font-weight: 700;
    line-height: 10px;
}
.page td {
    height: 18px;
    padding: 1px 5px;
    border: 1px solid black;
    vertical-align: top;
}
.page .place {
    width: 40px;
}
.scrollbar {
    display: flex;
    flex-direction: column;
    align-items: center;
    width: 22px;
    padding: 5px 0;
    background: #333;
    border-radius: 10px 0 0 10px;
}
.thumb {
    width: 11px;
    height: 63px;
    margin-top: auto;
    margin-bottom: 12px;
    border-radius: 5px;
    background: #c8c8c8;
}

/* Status bar */
.statusbar {
    display: flex;
    align-items: center;
    height: 27px;
    padding-left: 10px;
    background: #383838;
    font-size: 12px;
}
.status {
    gap: 3px;
    white-space: nowrap;
}
.words { margin-left: 28px; }
.proof { margin: 0 24px 0 26px; }
.views {
    display: flex;
    align-items: center;
    height: 100%;
    margin-left: auto;
    padding-right: 17px;
}
.focus {
    margin-right: 14px;
}
.view {
    width: 50px;
    height: 100%;
}
.current-view {
    background: #444;
}
.zoom-step {
    width: 16px;
    margin-left: 2px;
}
.view + .zoom-step {
    margin-left: 3px;
}
.zoom {
    appearance: none;
    width: 126px;
    height: 16px;
    margin: 0 2px;
    background: linear-gradient(#bbb, #bbb) center / 100% 1px no-repeat, linear-gradient(#bbb, #bbb) center / 1px 7px no-repeat;
}
.zoom::-webkit-slider-thumb {
    appearance: none;
    width: 6px;
    height: 14px;
    background: #c8c8c8;
}
.percent {
    margin-left: 14px;
}

/* Taskbar */
.taskbar {
    display: grid;
    grid-template-columns: 1fr auto 1fr;
    align-items: center;
    height: 60px;
    padding-left: 1px;
    background: #dadada;
    color: #1a1a1a;
}
.apps {
    display: flex;
    gap: 7px;
}
.app {
    position: relative;
    width: 48px;
    height: 48px;
    border-radius: 5px;
}
.app svg {
    width: 30px;
    height: 30px;
}
.running::after {
    content: "";
    position: absolute;
    bottom: 0;
    width: 8px;
    height: 4px;
    border-radius: 2px;
    background: #808080;
}
.front {
    background: #eee;
}
.front::after {
    width: 20px;
    background: #5c7488;
}
.ps {
    width: 28px;
    height: 28px;
    border-radius: 5px;
    background: #001e36;
    color: #31a8ff;
    font-size: 15px;
    font-weight: 600;
    line-height: 26px;
}
.canva {
    width: 30px;
    height: 30px;
    border-radius: 50%;
    background: linear-gradient(#10b5c9, #3a7fe0, #7d2ae8);
    color: white;
    font-family: "Liberation Serif", serif;
    font-style: italic;
    font-size: 10px;
    line-height: 30px;
}
.tray {
    display: flex;
    align-items: center;
    justify-content: flex-end;
    gap: 10px;
    padding-right: 24px;
}
.cloud {
    margin: 0 15px 0 11px;
}
.keyboard {
    margin-right: 15px;
}
.clock {
    margin-left: 6px;
    font-size: 14px;
    line-height: 20px;
    text-align: right;
}
```
